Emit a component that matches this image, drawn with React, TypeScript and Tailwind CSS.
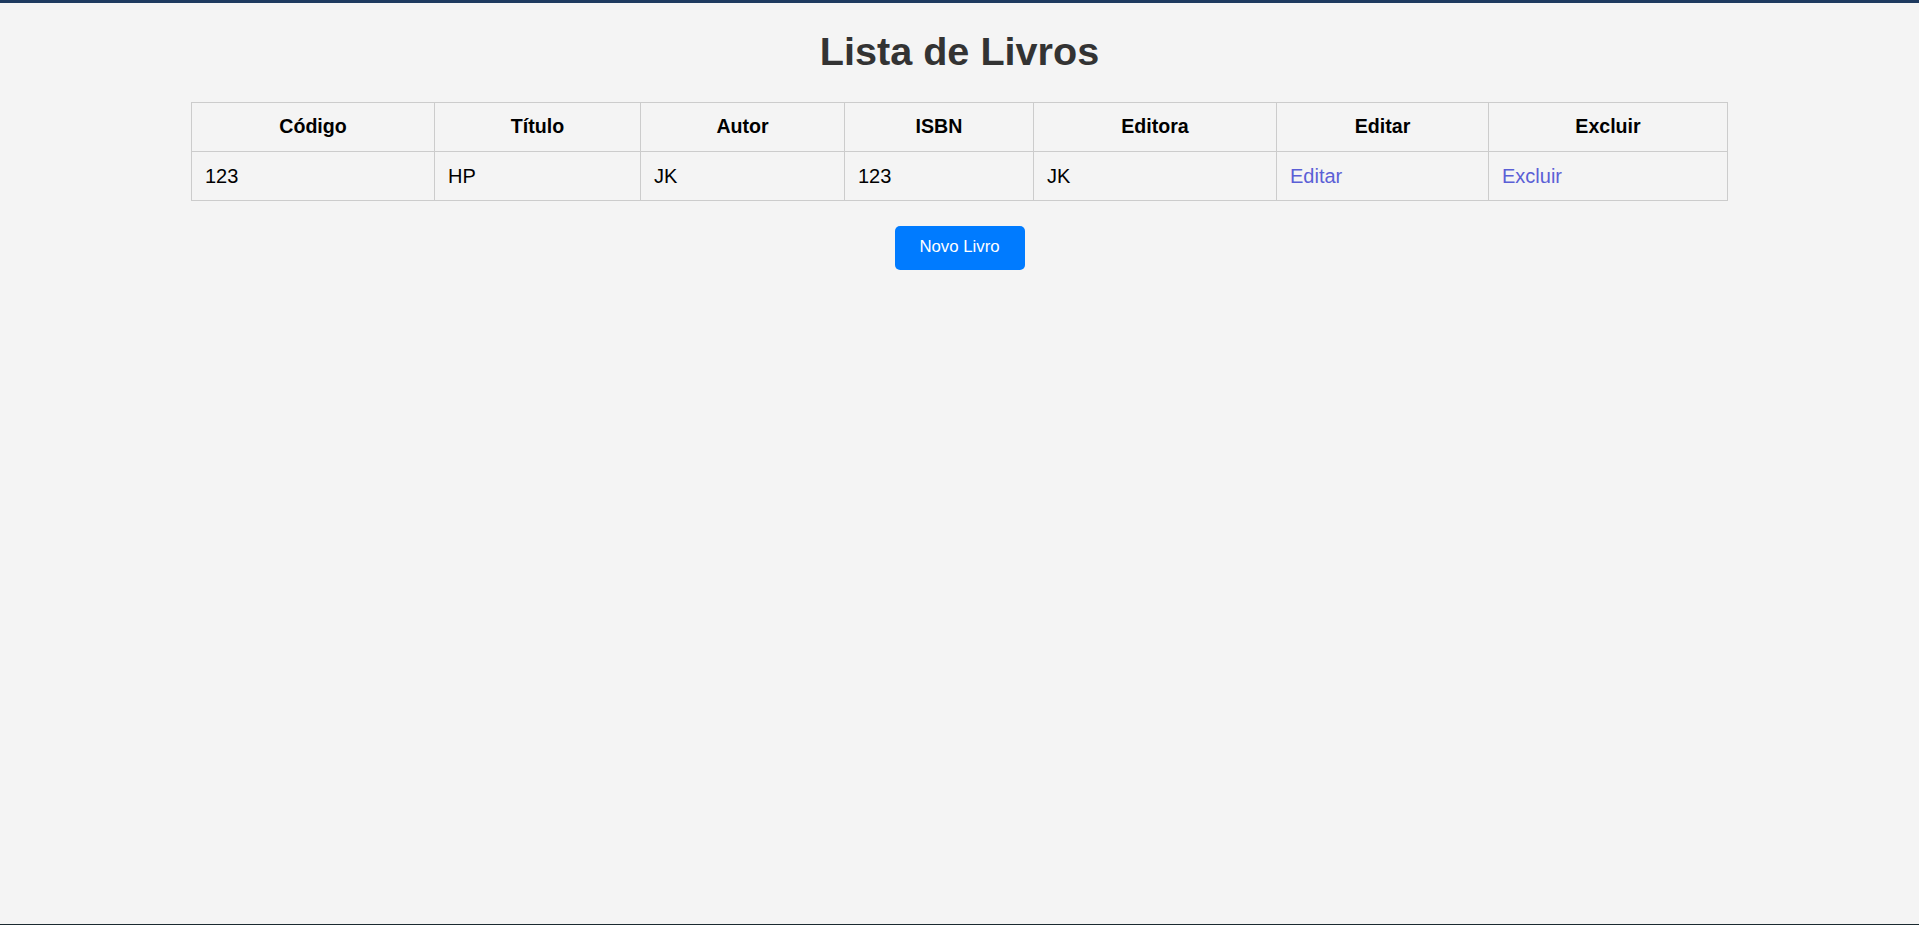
import React from "react";

const cols = [243, 206, 204, 189, 243, 212, 239];
const headers = ["Código", "Título", "Autor", "ISBN", "Editora", "Editar", "Excluir"];

export default function App() {
  return (
    <div className="h-[925px] flex flex-col bg-[#f4f4f4] font-['Liberation_Sans',Arial,sans-serif] overflow-hidden">
      <div className="h-[3px] bg-[#1e3a5f] shrink-0" />
      <main className="flex-1 flex flex-col items-center">
        <h1 className="mt-[26px] text-[39.6px] leading-[45.5px] font-bold text-[#333333]">Lista de Livros</h1>
        <table className="mt-[27px] w-[1536px] table-fixed border-collapse text-[20px] text-black">
          <colgroup>
            {cols.map((w, i) => (
              <col key={i} style={{ width: w }} />
            ))}
          </colgroup>
          <thead>
            <tr className="h-[49px]">
              {headers.map((h) => (
                <th key={h} className="border border-[#cccccc] px-[13px] py-0 text-center font-bold text-[19.6px]">
                  {h}
                </th>
              ))}
            </tr>
          </thead>
          <tbody>
            <tr className="h-[49px]">
              <td className="border border-[#cccccc] px-[13px] py-0">123</td>
              <td className="border border-[#cccccc] px-[13px] py-0">HP</td>
              <td className="border border-[#cccccc] px-[13px] py-0">JK</td>
              <td className="border border-[#cccccc] px-[13px] py-0">123</td>
              <td className="border border-[#cccccc] px-[13px] py-0">JK</td>
              <td className="border border-[#cccccc] px-[13px] py-0">
                <a href="#" className="text-[#5b5fd6]">Editar</a>
              </td>
              <td className="border border-[#cccccc] px-[13px] py-0">
                <a href="#" className="text-[#5b5fd6]">Excluir</a>
              </td>
            </tr>
          </tbody>
        </table>
        <button className="mt-[25px] w-[130px] h-[44px] rounded-[5px] bg-[#007bff] text-white text-[16.8px] leading-none">
          Novo Livro
        </button>
      </main>
      <div className="h-px bg-[#1b2a30] shrink-0" />
    </div>
  );
}
